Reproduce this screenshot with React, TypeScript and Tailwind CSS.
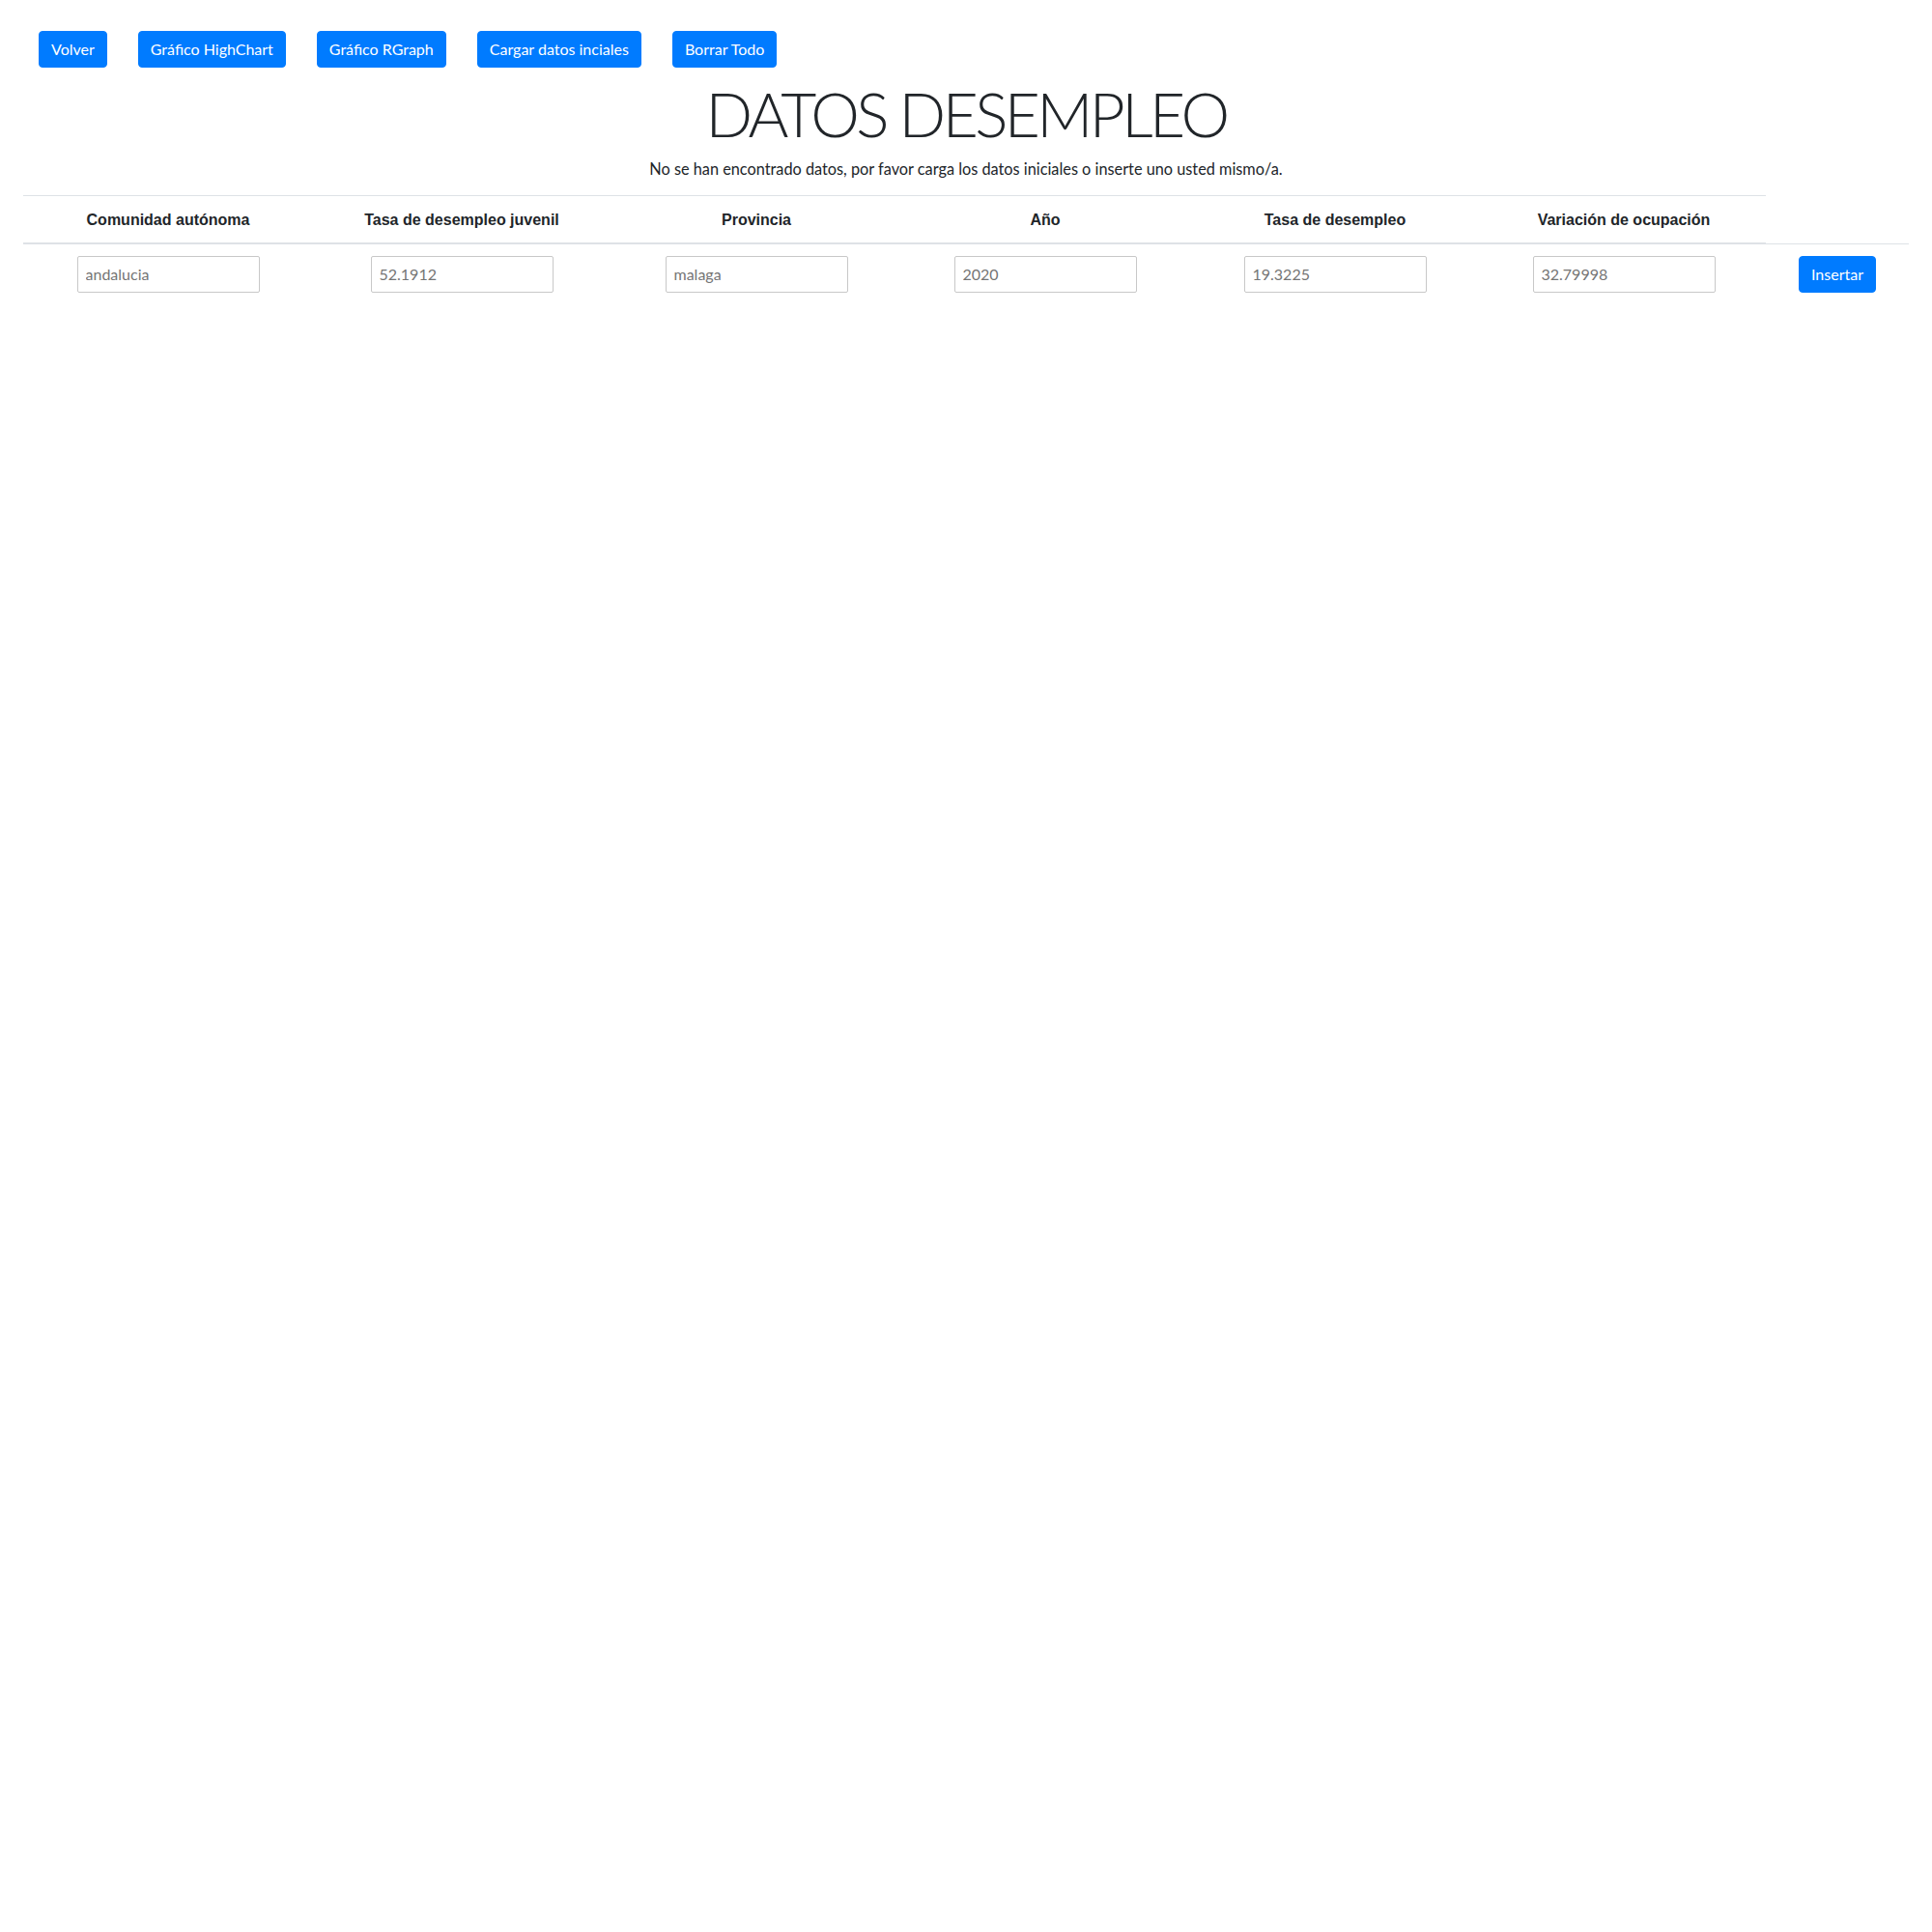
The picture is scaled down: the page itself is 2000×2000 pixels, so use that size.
import React from "react";

const buttons = ["Volver", "Gráfico HighChart", "Gráfico RGraph", "Cargar datos inciales", "Borrar Todo"];

const columns = [
    { label: "Comunidad autónoma", placeholder: "andalucia" },
    { label: "Tasa de desempleo juvenil", placeholder: "52.1912" },
    { label: "Provincia", placeholder: "malaga" },
    { label: "Año", placeholder: "2020" },
    { label: "Tasa de desempleo", placeholder: "19.3225" },
    { label: "Variación de ocupación", placeholder: "32.79998" },
];

const btn = "bg-[#007bff] text-white text-[16px] leading-6 px-3 py-1.5 border border-[#007bff] rounded-[4px]";
const grid = "grid grid-cols-[300px_308px_302px_296px_304px_294px_148px]";

export default function App() {
    return (
        <div className="min-h-screen bg-white text-[#212529] font-['Lato',sans-serif]">
            <div className="flex gap-8 pl-10 pt-8">
                {buttons.map((b) => (
                    <button key={b} className={btn}>{b}</button>
                ))}
            </div>

            <h1 className="mt-[10px] text-center text-[64px] leading-[1.2] font-light tracking-[-3.6px]">DATOS DESEMPLEO</h1>
            <p className="mt-[6px] text-center text-[16.3px] leading-6">
                No se han encontrado datos, por favor carga los datos iniciales o inserte uno usted mismo/a.
            </p>

            <div className="mx-6 mt-[15px]">
                <div className={grid}>
                    {columns.map((c) => (
                        <div
                            key={c.label}
                            className="border-t border-b-2 border-[#dee2e6] px-3 pt-[13px] pb-[11px] text-center font-bold text-[16px] leading-6 font-['Liberation_Sans',sans-serif]"
                        >
                            {c.label}
                        </div>
                    ))}
                    <div className="border-b border-[#dee2e6]" />
                </div>
                <div className={grid}>
                    {columns.map((c) => (
                        <div key={c.label} className="p-3 flex justify-center">
                            <input
                                placeholder={c.placeholder}
                                className="w-[189px] h-[38px] border border-[#c8c8c8] rounded-[2px] px-2 text-[16px] placeholder:text-[#757575] outline-none"
                            />
                        </div>
                    ))}
                    <div className="p-3 flex justify-center">
                        <button className={btn}>Insertar</button>
                    </div>
                </div>
            </div>
        </div>
    );
}
